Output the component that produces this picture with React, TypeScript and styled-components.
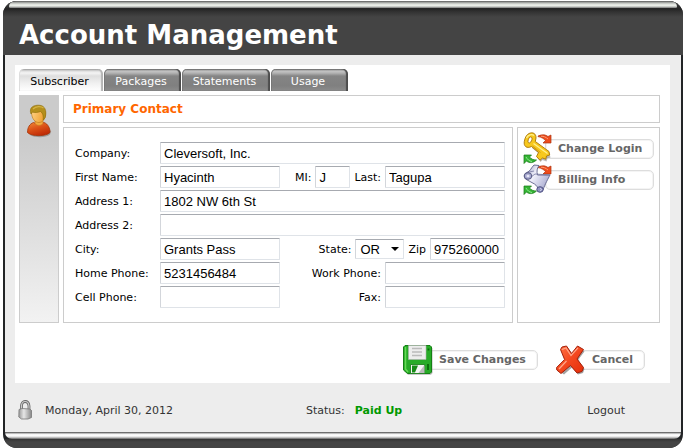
import React, { useState } from "react";
import styled, { createGlobalStyle, css } from "styled-components";

const GlobalStyle = createGlobalStyle`
  *, *::before, *::after { box-sizing: border-box; }
  body {
    margin: 0;
    background: #fff;
    font-family: Verdana, "DejaVu Sans", sans-serif;
    font-size: 11px;
    color: #000;
  }
  button, input, select { font-family: inherit; font-size: inherit; margin: 0; }
`;

const Frame = styled.main`
  margin: 1px 1px 0 3px;
  display: flex;
  flex-direction: column;
  background: #222426;
  border-radius: 14px;
  overflow: hidden;
`;

const Header = styled.header`
  background: linear-gradient(#4a4a4a 0, #242424 8px, #333 11px, #444 16px);
`;

const TopGloss = styled.div`
  height: 7px;
  margin: 0 6px;
  border-radius: 9px 9px 2px 2px;
  background: linear-gradient(#555 0, #8a8c8a 1px, #b9bcb8 2px, #d4d7d2 3px, #eef1ec 4px, #e4e8e2 5px, #777 7px);
`;

const Title = styled.h1`
  margin: 0;
  padding: 12px 16px 5px;
  color: #fff;
  font-size: 26px;
  line-height: 30px;
  font-weight: bold;
  white-space: nowrap;
`;

const Body = styled.div`
  margin: 0 2px;
  padding: 10px 11px 0 10px;
  background: #ededed;
`;

const Panel = styled.section`
  background: #fff;
  padding: 4px 10px 8px 4px;
`;

const Tabs = styled.div`
  display: flex;
  gap: 1px;
  margin-bottom: 4px;
`;

const Tab = styled.button<{ $active: boolean; $width: number }>`
  width: ${(p) => p.$width}px;
  height: 22px;
  padding: 3px 3px 0 0;
  border: 0;
  border-radius: 5px 5px 0 0;
  line-height: 18px;
  text-align: center;
  cursor: pointer;
  color: #fff;
  background: linear-gradient(#666 0, #c4c4c4 2px, #b4b4b4 4px, #858585 7px, #808080 17px, #8c8c8c 22px);
  box-shadow: inset -2px 0 1px #4c4c4c, inset 1px 0 0 #777;
  ${(p) =>
    p.$active &&
    css`
      color: #000;
      background: linear-gradient(#999 0, #ddd 2px, #f4f4f4 4px, #dedede 7px, #f0f0f0 14px, #fff 22px);
      box-shadow: inset -2px 0 1px #b4b4b4, inset 1px 0 0 #ddd;
    `}
`;

const Content = styled.div`
  display: grid;
  grid-template-columns: 40px minmax(0, 1fr) 143px;
  grid-template-rows: 28px auto;
  gap: 4px;
`;

const Sidebar = styled.aside`
  grid-row: 1 / 3;
  border: 1px solid #ccc;
  background: linear-gradient(#cbcbcb 20%, #f2f2f2);
  padding: 8px 6px;
`;

const SectionTitle = styled.h2`
  grid-column: 2 / 4;
  margin: 0;
  padding: 0 9px;
  border: 1px solid #ccc;
  color: #ff6600;
  font-size: 12px;
  line-height: 26px;
`;

const Form = styled.form`
  border: 1px solid #ccc;
  padding: 14px 7px 14px 11px;
  display: flex;
  flex-direction: column;
  gap: 2px;
`;

const Row = styled.div`
  display: flex;
  height: 22px;
  align-items: center;
`;

const RowLabel = styled.label`
  flex: 0 0 85px;
  white-space: nowrap;
`;

const Trailing = styled.div`
  flex: 1;
  display: flex;
  align-items: center;
  justify-content: flex-end;
  gap: 4px;
  white-space: nowrap;
`;

const fieldBox = css`
  height: 22px;
  border: 1px solid #dfe3e8;
  border-top-color: #a7aab0;
  border-left-color: #d3d6db;
  border-radius: 1px;
  background: #fff;
  color: #000;
  font-family: Arial, "Liberation Sans", sans-serif;
  font-size: 13px;
  outline-color: #88a;
`;

const Field = styled.input<{ $width?: number }>`
  ${fieldBox}
  ${(p) => (p.$width ? `flex: 0 0 ${p.$width}px; width: ${p.$width}px;` : "flex: 1; min-width: 0;")}
  padding: 0 3px;
`;

const SelectWrap = styled.span`
  display: grid;
  align-items: center;
  width: 49px;

  & > * { grid-area: 1 / 1; }
  & > svg { justify-self: end; margin-right: 5px; pointer-events: none; }
`;

const StateSelect = styled.select`
  ${fieldBox}
  width: 100%;
  height: 20px;
  appearance: none;
  padding: 0 4px;
`;

const ActionButton = styled.button`
  display: flex;
  align-items: center;
  height: 31px;
  padding: 0;
  border: 0;
  background: none;
  color: #666;
  font-weight: bold;
  white-space: nowrap;
  text-align: left;
  cursor: pointer;

  & > svg { flex: none; z-index: 1; }
`;

const Pill = styled.span`
  flex: 1;
  height: 20px;
  margin-left: -8px;
  padding: 0 11px 0 13px;
  border: 1px solid #ddd;
  border-radius: 5px;
  background: #fff;
  box-shadow: inset 0 0 0 1px #f4f4f4;
  line-height: 18px;
`;

const SideActions = styled.div`
  border: 1px solid #ccc;
  padding: 4px 5px;
  display: flex;
  flex-direction: column;

  ${Pill} {
    margin-top: 3px;
    padding: 0 8px 0 12px;
  }
`;

const FormActions = styled.div`
  display: flex;
  justify-content: flex-end;
  gap: 18px;
  padding: 21px 15px 0 0;
`;

const Footer = styled.footer`
  display: grid;
  grid-template-columns: 27px 261px 1fr auto;
  align-items: center;
  height: 49px;
  padding: 5px 45px 0 3px;
  color: #333;
`;

const Paid = styled.strong`
  color: #090;
  margin-left: 10px;
`;

const Logout = styled.a`
  color: #333;
  text-decoration: none;
`;

const BottomGloss = styled.div`
  height: 7px;
  margin: 0 2px;
  border-radius: 0 0 7px 7px;
  background: linear-gradient(#555 0, #888 1px, #f2f2f2 2px, #fff 4px, #aaa 6px, #555 7px);
`;

const BottomEdge = styled.div`
  height: 9px;
  background: linear-gradient(#333, #444 3px);
`;

const UserIcon = () => (
  <svg width="26" height="34" viewBox="0 0 26 34" aria-hidden="true">
    <defs>
      <linearGradient id="uBody" x1="0" y1="0" x2="0.5" y2="1">
        <stop offset="0" stopColor="#f08a38" />
        <stop offset="0.5" stopColor="#dc5218" />
        <stop offset="1" stopColor="#c02c08" />
      </linearGradient>
      <linearGradient id="uFace" x1="0" y1="0" x2="1" y2="0.3">
        <stop offset="0" stopColor="#ffd488" />
        <stop offset="1" stopColor="#f0a030" />
      </linearGradient>
    </defs>
    <path d="M4 31c5 3 16 3 20-.5l1-3-4-6z" fill="#777" opacity="0.55" />
    <path d="M1.500 28.500c0-5 2-8.500 6-10l5 2 5.500-2c4 1.500 6 5.500 6 10-4 4.200-18.500 4.200-22.500 0z" fill="url(#uBody)" stroke="#a43408" strokeWidth="0.8" />
    <path d="M9 16v3.500c2 2.500 6 2.500 8 0V15z" fill="#f3a940" stroke="#c4721c" strokeWidth="0.6" />
    <path d="M5.500 9c0-6 13.500-7 14 0 .4 5-2.500 9.500-6.500 9.500S6 15 5.500 9z" fill="url(#uFace)" stroke="#b87418" strokeWidth="0.6" />
    <path d="M5 10C2.500 3 8 1 13 1.200c6 .3 8 5.300 6.200 12.300l-2 2.500c.3-4-.2-7-2.700-8.500C12 8.500 8.500 9 6.500 8z" fill="#b48f1c" stroke="#8c6c08" strokeWidth="0.6" />
    <path d="M7 5c3-3 8-3 10.500-1" fill="none" stroke="#d4b444" strokeWidth="1.200" />
  </svg>
);

const SwapArrows = () => (
  <>
    <path d="M15 4c4-1.800 7.500-1.500 10 .5l3-1.500v8h-8l2.500-2.500C20.500 6.500 18.500 5.200 15 4.600z" fill="#ee4b1c" stroke="#a93410" strokeWidth="0.7" />
    <path d="M18 4.200c3 0 4.500.8 7 2.800" fill="none" stroke="#ff9a70" />
    <path d="M1 23h7.500L6.500 25c1.500 2 4 3 7 3-3 3-7 3.500-10 1L1 31.500z" fill="#35b535" stroke="#167516" strokeWidth="0.7" />
    <path d="M3 25c1.500 2.500 3 4 6 4.500" fill="none" stroke="#8ee88e" />
  </>
);

const KeyIcon = () => (
  <svg width="30" height="32" viewBox="0 0 30 32" aria-hidden="true">
    <SwapArrows />
    <path d="M13 12l13.500 9.500 1 4-3 1-1 3-4-1.500-2 2-3-4 2-4L9 16z" fill="#777" opacity="0.5" />
    <path
      fillRule="evenodd"
      d="M6 1.500C9.500-.3 13.300 1.500 13 6l-.7 3.500L26 19.500l.7 3.500-3.200 1-.7 3.200-3.300-1.200-2.500 2.200-3.500-3.700 2-4L8.500 14.500C3.500 17 .5 14 1.300 9.500 2 5.500 3.500 2.700 6 1.500zM6 6c-1.500 2.500-1.300 5 .3 5 1.900-.5 3-3.500 2.700-5C8.500 4.500 7 4.500 6 6z"
      fill="#f7c81e"
      stroke="#a87408"
      strokeWidth="0.9"
    />
    <path d="M10.500 11.500l14 10M3.500 6C5 2.500 9 1.800 11 3.500" fill="none" stroke="#fff08a" strokeWidth="1.400" />
    <path d="M9.500 14l8 6.500" fill="none" stroke="#d79a0c" strokeWidth="1" />
  </svg>
);

const ScrollIcon = () => (
  <svg width="30" height="32" viewBox="0 0 30 32" aria-hidden="true">
    <defs>
      <linearGradient id="paper" x1="0" y1="0" x2="1" y2="0.6">
        <stop offset="0" stopColor="#9496bd" />
        <stop offset="0.45" stopColor="#f0f0fb" />
        <stop offset="1" stopColor="#a9abd0" />
      </linearGradient>
    </defs>
    <SwapArrows />
    <path d="M11 2l5 .5c-2 2.500-2.500 6-1.500 9.500h12.500c-2 4-4.500 8-7 15-1 2.500-4.500 2-5.500 0 1-2.500-1-4.500-3-6L2.500 16C.5 13.500 1 10.500 4 9.500 7.500 8 8 5 11 2z" fill="url(#paper)" stroke="#5f618a" strokeWidth="0.9" />
    <path d="M4 9.500l7-1.500M8 14l4-3 15 1" fill="none" stroke="#74769f" strokeWidth="0.8" />
    <ellipse cx="5" cy="13" rx="3.800" ry="3.300" fill="#a9abd0" stroke="#4f517c" strokeWidth="0.9" />
    <ellipse cx="5" cy="13" rx="1.500" ry="1.200" fill="#e6e6f6" />
    <ellipse cx="17" cy="26.500" rx="3.200" ry="2.800" fill="#9294c2" stroke="#45477a" strokeWidth="0.9" />
    <path d="M17 25.500c2 0 2 2 0 2" fill="none" stroke="#e6e6f6" strokeWidth="0.8" />
  </svg>
);

const FloppyIcon = () => (
  <svg width="30" height="30" viewBox="0 0 30 30" aria-hidden="true">
    <path d="M2 2h26l1.500 1.500V28l-1.500 1.800H5L1.500 26z" fill="#888" opacity="0.6" />
    <path d="M2 .5h25L28.500 2v25L27 28.500H4.500L.5 25V2z" fill="#27ab27" stroke="#158015" />
    <path d="M2.500 2v22l2.500 3" fill="none" stroke="#66d956" strokeWidth="1.500" />
    <path d="M5.500 .5h17.500V14.500H5.500z" fill="#ededed" stroke="#b0b0b0" strokeWidth="0.6" />
    <path d="M9 3.500h10M9 7h10M9 10.500h10" stroke="#bbb" strokeWidth="1.500" />
    <path d="M7.500 19.500h14v9h-14z" fill="#f4f4f4" stroke="#117811" strokeWidth="0.8" />
    <path d="M9 20.500h6l-3 7H9z" fill="#168b16" />
    <path d="M15.500 28l6-8v8z" fill="#bbb" />
    <path d="M25.500 3.500v2M25 19v6" stroke="#0a690a" strokeWidth="1.800" />
  </svg>
);

const CrossIcon = () => (
  <svg width="30" height="30" viewBox="0 0 30 30" aria-hidden="true">
    <defs>
      <linearGradient id="cross" x1="0" y1="0" x2="1" y2="1">
        <stop offset="0" stopColor="#ff7448" />
        <stop offset="0.5" stopColor="#f4481f" />
        <stop offset="1" stopColor="#e42e0a" />
      </linearGradient>
    </defs>
    <path d="M6 4l6-1 4.500 6L23 2.500l5.500 4-6.500 8.500 6.500 9-1.500 4-5 1.500-6-7-8 7-5-3.500 7-10z" fill="#666" opacity="0.6" />
    <path
      d="M4.500 4.500L6 2l4.500-1 5 7.500L21.500 1 27.500 4.500 21 14l6.500 8.500L26 26.500l-5 1.500-6.500-7.500L5 28.500.8 25l-.2-2.500 8-8z"
      fill="url(#cross)"
      stroke="#a4200a"
      strokeLinejoin="round"
    />
    <path d="M6 4.500l4-1.500 5 7.500L22 2.800M3 24l7.500-8" fill="none" stroke="#ffa588" strokeWidth="1.200" />
  </svg>
);

const LockIcon = () => (
  <svg width="15" height="20" viewBox="0 0 15 20" aria-hidden="true">
    <defs>
      <linearGradient id="lock">
        <stop offset="0" stopColor="#999" />
        <stop offset="0.4" stopColor="#e6e6e6" />
        <stop offset="1" stopColor="#888" />
      </linearGradient>
    </defs>
    <path d="M3.500 10V6c0-6 7-6 7.500 0v4" fill="none" stroke="#666" strokeWidth="2.800" />
    <path d="M3.500 10V6c0-6 7-6 7.500 0v4" fill="none" stroke="#ccc" strokeWidth="1.200" />
    <path d="M1 9.500l3-1 8 .5 1.500 1.500v7L10 19H3.500L.8 17z" fill="url(#lock)" stroke="#777" strokeWidth="0.8" />
  </svg>
);

const tabs = [
  { name: "Subscriber", width: 84 },
  { name: "Packages", width: 77 },
  { name: "Statements", width: 88 },
  { name: "Usage", width: 77 },
];

export default function App() {
  const [active, setActive] = useState("Subscriber");
  return (
    <>
      <GlobalStyle />
      <Frame>
        <Header>
          <TopGloss />
          <Title>Account Management</Title>
        </Header>
        <Body>
          <Panel>
            <Tabs role="tablist">
              {tabs.map((t) => (
                <Tab
                  key={t.name}
                  type="button"
                  role="tab"
                  aria-selected={active === t.name}
                  $active={active === t.name}
                  $width={t.width}
                  onClick={() => setActive(t.name)}
                >
                  {t.name}
                </Tab>
              ))}
            </Tabs>
            <Content>
              <Sidebar>
                <UserIcon />
              </Sidebar>
              <SectionTitle>Primary Contact</SectionTitle>
              <Form id="contact" onSubmit={(e) => e.preventDefault()}>
                <Row>
                  <RowLabel htmlFor="company">Company:</RowLabel>
                  <Field id="company" defaultValue="Cleversoft, Inc." />
                </Row>
                <Row>
                  <RowLabel htmlFor="first">First Name:</RowLabel>
                  <Field id="first" $width={120} defaultValue="Hyacinth" />
                  <Trailing>
                    <label htmlFor="mi">MI:</label>
                    <Field id="mi" $width={35} defaultValue="J" />
                    <label htmlFor="last">Last:</label>
                    <Field id="last" $width={120} defaultValue="Tagupa" />
                  </Trailing>
                </Row>
                <Row>
                  <RowLabel htmlFor="address1">Address 1:</RowLabel>
                  <Field id="address1" defaultValue="1802 NW 6th St" />
                </Row>
                <Row>
                  <RowLabel htmlFor="address2">Address 2:</RowLabel>
                  <Field id="address2" />
                </Row>
                <Row>
                  <RowLabel htmlFor="city">City:</RowLabel>
                  <Field id="city" $width={120} defaultValue="Grants Pass" />
                  <Trailing>
                    <label htmlFor="state">State:</label>
                    <SelectWrap>
                      <StateSelect id="state" defaultValue="OR">
                        <option>OR</option>
                      </StateSelect>
                      <svg width="8" height="4" viewBox="0 0 8 4" aria-hidden="true">
                        <path d="M0 0h8L4 4z" />
                      </svg>
                    </SelectWrap>
                    <label htmlFor="zip">Zip</label>
                    <Field id="zip" $width={75} defaultValue="975260000" />
                  </Trailing>
                </Row>
                <Row>
                  <RowLabel htmlFor="home">Home Phone:</RowLabel>
                  <Field id="home" $width={120} defaultValue="5231456484" />
                  <Trailing>
                    <label htmlFor="work">Work Phone:</label>
                    <Field id="work" $width={120} />
                  </Trailing>
                </Row>
                <Row>
                  <RowLabel htmlFor="cell">Cell Phone:</RowLabel>
                  <Field id="cell" $width={120} />
                  <Trailing>
                    <label htmlFor="fax">Fax:</label>
                    <Field id="fax" $width={120} />
                  </Trailing>
                </Row>
              </Form>
              <SideActions>
                <ActionButton type="button">
                  <KeyIcon />
                  <Pill>Change Login</Pill>
                </ActionButton>
                <ActionButton type="button">
                  <ScrollIcon />
                  <Pill>Billing Info</Pill>
                </ActionButton>
              </SideActions>
            </Content>
            <FormActions>
              <ActionButton type="submit" form="contact">
                <FloppyIcon />
                <Pill>Save Changes</Pill>
              </ActionButton>
              <ActionButton type="button">
                <CrossIcon />
                <Pill>Cancel</Pill>
              </ActionButton>
            </FormActions>
          </Panel>
          <Footer>
            <LockIcon />
            <span>Monday, April 30, 2012</span>
            <span>
              Status:<Paid>Paid Up</Paid>
            </span>
            <Logout href="#logout">Logout</Logout>
          </Footer>
        </Body>
        <BottomGloss />
        <BottomEdge />
      </Frame>
    </>
  );
}
